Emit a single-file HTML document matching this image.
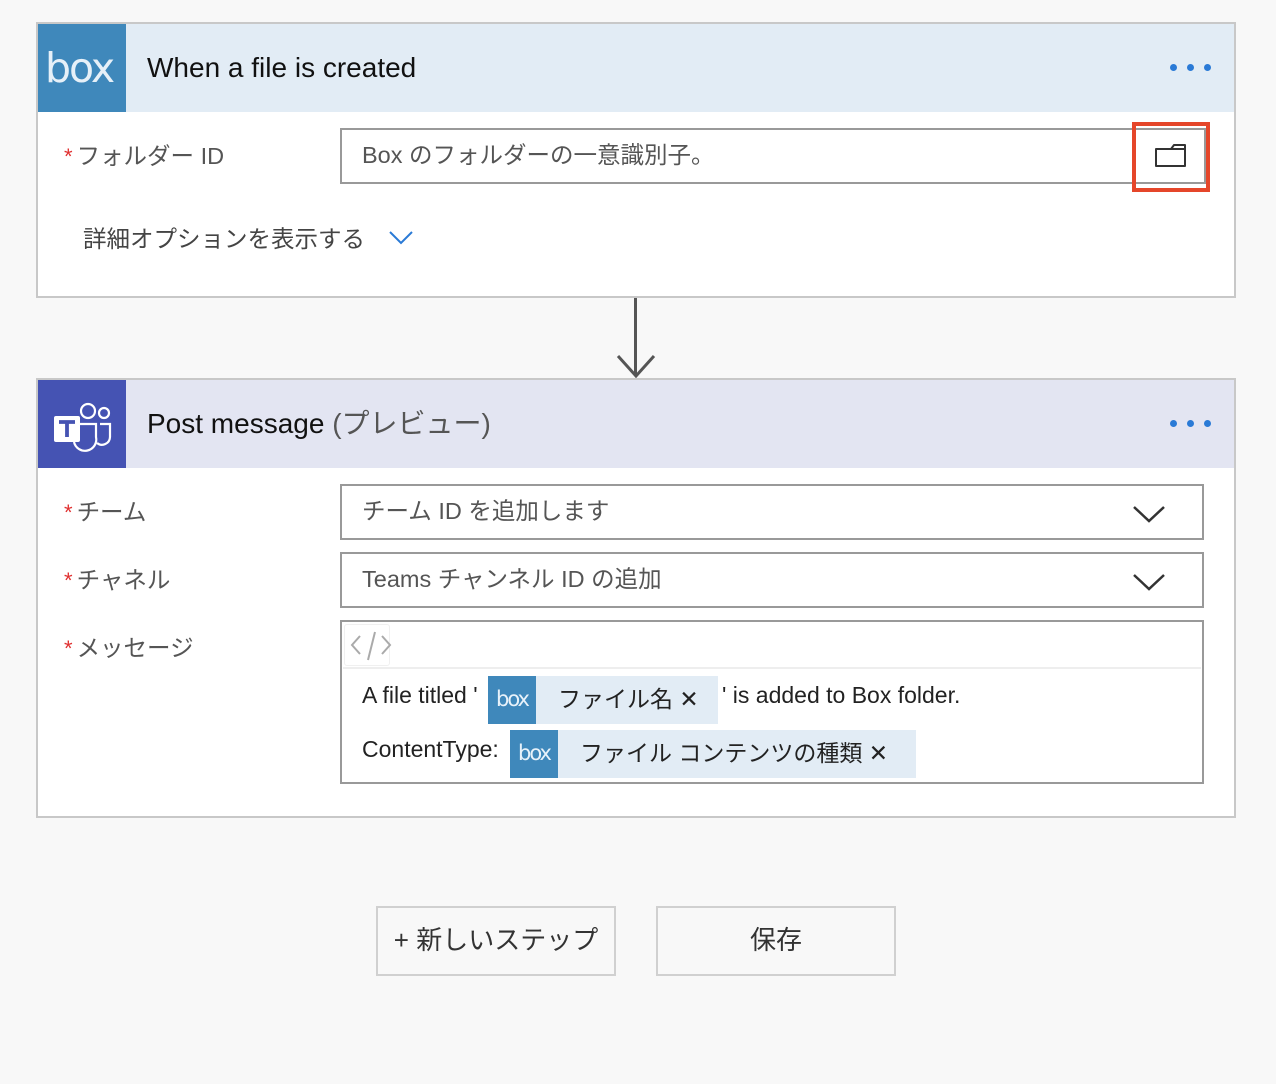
<!DOCTYPE html>
<html><head><meta charset="utf-8"><style>
*{box-sizing:border-box;margin:0;padding:0}
body{width:1276px;height:1084px;background:#f8f8f8;position:relative;overflow:hidden;font-family:"Liberation Sans","Noto Sans CJK JP",sans-serif;color:#333;line-height:1.2}
.a{position:absolute}
.card{position:absolute;left:36px;width:1200px;background:#fff;border:2px solid #c8c8c8}
.hdr{position:absolute;left:0;top:0;width:1196px;height:88px}
.ico{position:absolute;left:0;top:0;width:88px;height:88px}
.title{position:absolute;left:109px;top:27px;font-size:28px;color:#111;white-space:nowrap}
.dots{position:absolute;right:24px;top:40px;width:40px;height:8px}
.dots i{position:absolute;top:0;width:7px;height:7px;border-radius:50%;background:#2a7ad6}
.lab{position:absolute;font-size:23.5px;color:#555;white-space:nowrap}
.lab b{color:#e03030;font-weight:normal;margin-right:4px;font-size:22px}
.inp{position:absolute;left:302px;width:864px;height:56px;border:2px solid #999;background:#fff;font-size:23.5px;color:#555;padding:11px 0 0 20px;white-space:nowrap}
.chev{position:absolute;right:36px;top:18px}
.boxlogo{font-family:"DejaVu Sans","Liberation Sans",sans-serif;color:#e6f0f8;letter-spacing:-2px}
.tok{position:absolute;height:48px;background:#e2ecf5;font-size:23px;color:#222}
.tok .bi{position:absolute;left:0;top:0;width:48px;height:48px;background:#3f88bb;color:#e8f2fa;font-family:"DejaVu Sans",sans-serif;font-size:21px;text-align:center;line-height:46px;letter-spacing:-2px}
.btn{position:absolute;top:906px;width:240px;height:70px;border:2px solid #d0d0d0;background:#f8f8f8;font-size:26px;color:#333;text-align:center;line-height:64px}
</style></head><body>

<div class="card" style="top:22px;height:276px">
 <div class="hdr" style="background:#e2ecf5">
  <div class="ico" style="background:#3f88bb"><div class="boxlogo" style="position:absolute;left:7px;top:20px;font-size:41px">box</div></div>
  <div class="title">When a file is created</div>
  <div class="dots"><i style="left:0"></i><i style="left:17px"></i><i style="left:34px"></i></div>
 </div>
 <div class="lab" style="left:26px;top:118px"><b>*</b>フォルダー ID</div>
 <div class="inp" style="top:104px;width:866px">Box のフォルダーの一意識別子。</div>
 <div class="a" style="left:1094px;top:98px;width:78px;height:70px;border:4px solid #e5462a"></div>
 <svg class="a" style="left:1116px;top:117px" width="34" height="28" viewBox="0 0 34 28"><path d="M2 8 H17 L20 4 H31 V25 H2 Z M17 8 H31" fill="none" stroke="#333" stroke-width="2" stroke-linejoin="round"/></svg>
 <div class="lab" style="left:45px;top:201px;color:#444">詳細オプションを表示する</div>
 <svg class="a" style="left:350px;top:205px" width="26" height="16"><path d="M2 3 L13 14 L24 3" fill="none" stroke="#2a7ad6" stroke-width="2"/></svg>
</div>

<div class="a" style="left:634px;top:298px;width:3px;height:76px;background:#555"></div>
<svg class="a" style="left:615px;top:352px" width="42" height="28"><path d="M3 4 L21 24 L39 4" fill="none" stroke="#555" stroke-width="3"/></svg>

<div class="card" style="top:378px;height:440px">
 <div class="hdr" style="background:#e3e5f2">
  <div class="ico" style="background:#4553b3">
   <svg width="88" height="88" viewBox="0 0 88 88">
    <circle cx="50" cy="31" r="7" fill="none" stroke="#fff" stroke-width="2.2"/>
    <circle cx="66" cy="33" r="5" fill="none" stroke="#fff" stroke-width="2.2"/>
    <path d="M40 44 H58 V57 A11 11 0 0 1 36 62" fill="none" stroke="#fff" stroke-width="2.2"/>
    <path d="M62 44 H72 V57 A8 8 0 0 1 59 63" fill="none" stroke="#fff" stroke-width="2.2"/>
    <rect x="16" y="36" width="26" height="26" rx="2" fill="#fff"/>
    <path d="M21 42 H37 M29 42 V57" stroke="#4553b3" stroke-width="3.8"/>
   </svg>
  </div>
  <div class="title">Post message <span style="color:#555">(プレビュー)</span></div>
  <div class="dots"><i style="left:0"></i><i style="left:17px"></i><i style="left:34px"></i></div>
 </div>
 <div class="lab" style="left:26px;top:118px"><b>*</b>チーム</div>
 <div class="lab" style="left:26px;top:186px"><b>*</b>チャネル</div>
 <div class="lab" style="left:26px;top:254px"><b>*</b>メッセージ</div>
 <div class="inp" style="top:104px">チーム ID を追加します<svg class="chev" width="34" height="20"><path d="M2 3 L17 17 L32 3" fill="none" stroke="#333" stroke-width="2.5"/></svg></div>
 <div class="inp" style="top:172px">Teams チャンネル ID の追加<svg class="chev" width="34" height="20"><path d="M2 3 L17 17 L32 3" fill="none" stroke="#333" stroke-width="2.5"/></svg></div>
 <div class="inp" style="top:240px;height:164px;padding:0">
  <div class="a" style="left:1px;top:1px;width:858px;height:46px;border-bottom:2px solid #eee"></div>
  <div class="a" style="left:2px;top:2px;width:46px;height:42px;border:1px solid #f0f0f0;border-radius:3px"></div>
  <svg class="a" style="left:4px;top:6px" width="46" height="36"><path d="M14 8 L6 17 L14 26 M22 32 L29 4 M36 8 L44 17 L36 26" fill="none" stroke="#aaa" stroke-width="2"/></svg>
  <div class="a" style="left:20px;top:60px;font-size:23px;color:#222;white-space:nowrap">A file titled '</div>
  <div class="tok" style="left:146px;top:54px;width:230px"><div class="bi">box</div><span class="a" style="left:70px;top:10px;white-space:nowrap">ファイル名 ✕</span></div>
  <div class="a" style="left:380px;top:60px;font-size:23px;color:#222;white-space:nowrap">' is added to Box folder.</div>
  <div class="a" style="left:20px;top:114px;font-size:23px;color:#222">ContentType:</div>
  <div class="tok" style="left:168px;top:108px;width:406px"><div class="bi">box</div><span class="a" style="left:70px;top:10px;white-space:nowrap">ファイル コンテンツの種類 ✕</span></div>
 </div>
</div>

<div class="btn" style="left:376px">+ 新しいステップ</div>
<div class="btn" style="left:656px">保存</div>
</body></html>
